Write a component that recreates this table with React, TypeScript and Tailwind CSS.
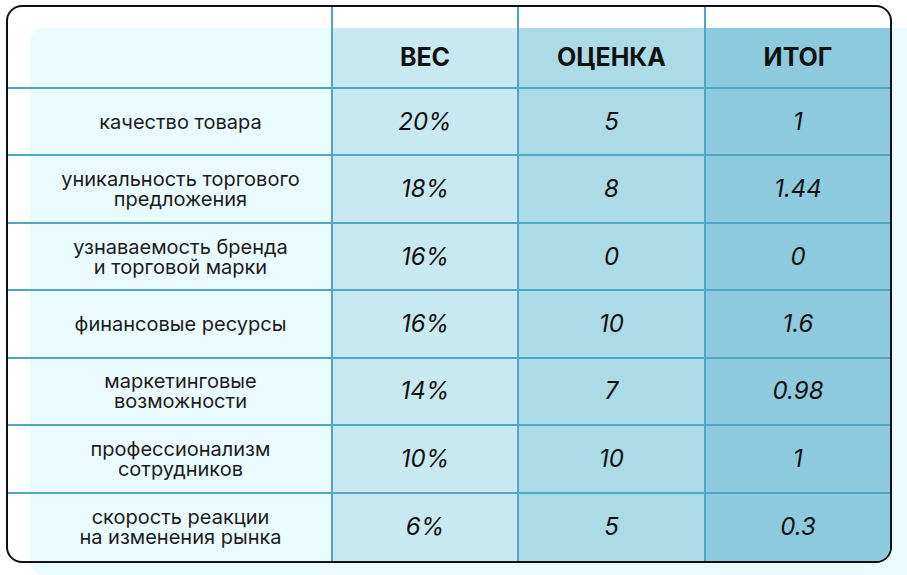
const rows = [
  { label: ["качество товара"], weight: "20%", score: "5", total: "1" },
  { label: ["уникальность торгового", "предложения"], weight: "18%", score: "8", total: "1.44" },
  { label: ["узнаваемость бренда", "и торговой марки"], weight: "16%", score: "0", total: "0" },
  { label: ["финансовые ресурсы"], weight: "16%", score: "10", total: "1.6" },
  { label: ["маркетинговые", "возможности"], weight: "14%", score: "7", total: "0.98" },
  { label: ["профессионализм", "сотрудников"], weight: "10%", score: "10", total: "1" },
  { label: ["скорость реакции", "на изменения рынка"], weight: "6%", score: "5", total: "0.3" },
];

const lineB = "border-b-2 border-[#4fa7c4]";
const lineR = "border-r-2 border-[#4fa7c4]";

export default function App() {
  return (
    <div className="relative h-[575px] w-[907px] overflow-hidden bg-white font-['Inter','Noto_Sans',sans-serif] text-[#1c1c1c]">
      {/* light backdrop behind the table */}
      <div className="absolute bottom-0 left-[30px] right-[-20px] top-[28px] rounded-[14px] bg-[#eafbfe]" />

      <div className="relative ml-[6px] mt-[5px] h-[558px] w-[886px] overflow-hidden rounded-[16px] border-2 border-[#111]">
        <div className="grid h-full grid-cols-[325px_186px_187px_184px] grid-rows-[82px_repeat(7,1fr)]">
          {/* header */}
          <div className={`${lineB} ${lineR}`} />
          <div className={`${lineB} ${lineR} flex flex-col pt-[21px]`}>
            <div className="flex flex-1 items-center justify-center bg-[#c9e9f2] text-[25px] font-bold text-[#111]">
              ВЕС
            </div>
          </div>
          <div className={`${lineB} ${lineR} flex flex-col pt-[21px]`}>
            <div className="flex flex-1 items-center justify-center bg-[#acdbe8] text-[25px] font-bold text-[#111]">
              ОЦЕНКА
            </div>
          </div>
          <div className={`${lineB} flex flex-col pt-[21px]`}>
            <div className="flex flex-1 items-center justify-center bg-[#8dcadd] text-[25px] font-bold text-[#111]">
              ИТОГ
            </div>
          </div>

          {rows.map((r, i) => {
            const b = i < rows.length - 1 ? lineB : "";
            return (
              <div key={i} className="contents">
                <div className={`${b} ${lineR} flex items-center justify-center pl-[22px] text-center text-[20px] leading-[20px]`}>
                  <div>
                    {r.label.map((l) => (
                      <div key={l}>{l}</div>
                    ))}
                  </div>
                </div>
                <div className={`${b} ${lineR} flex items-center justify-center bg-[#c9e9f2] text-[24px] italic text-[#111]`}>
                  {r.weight}
                </div>
                <div className={`${b} ${lineR} flex items-center justify-center bg-[#acdbe8] text-[24px] italic text-[#111]`}>
                  {r.score}
                </div>
                <div className={`${b} flex items-center justify-center bg-[#8dcadd] text-[24px] italic text-[#111]`}>
                  {r.total}
                </div>
              </div>
            );
          })}
        </div>
      </div>
    </div>
  );
}
